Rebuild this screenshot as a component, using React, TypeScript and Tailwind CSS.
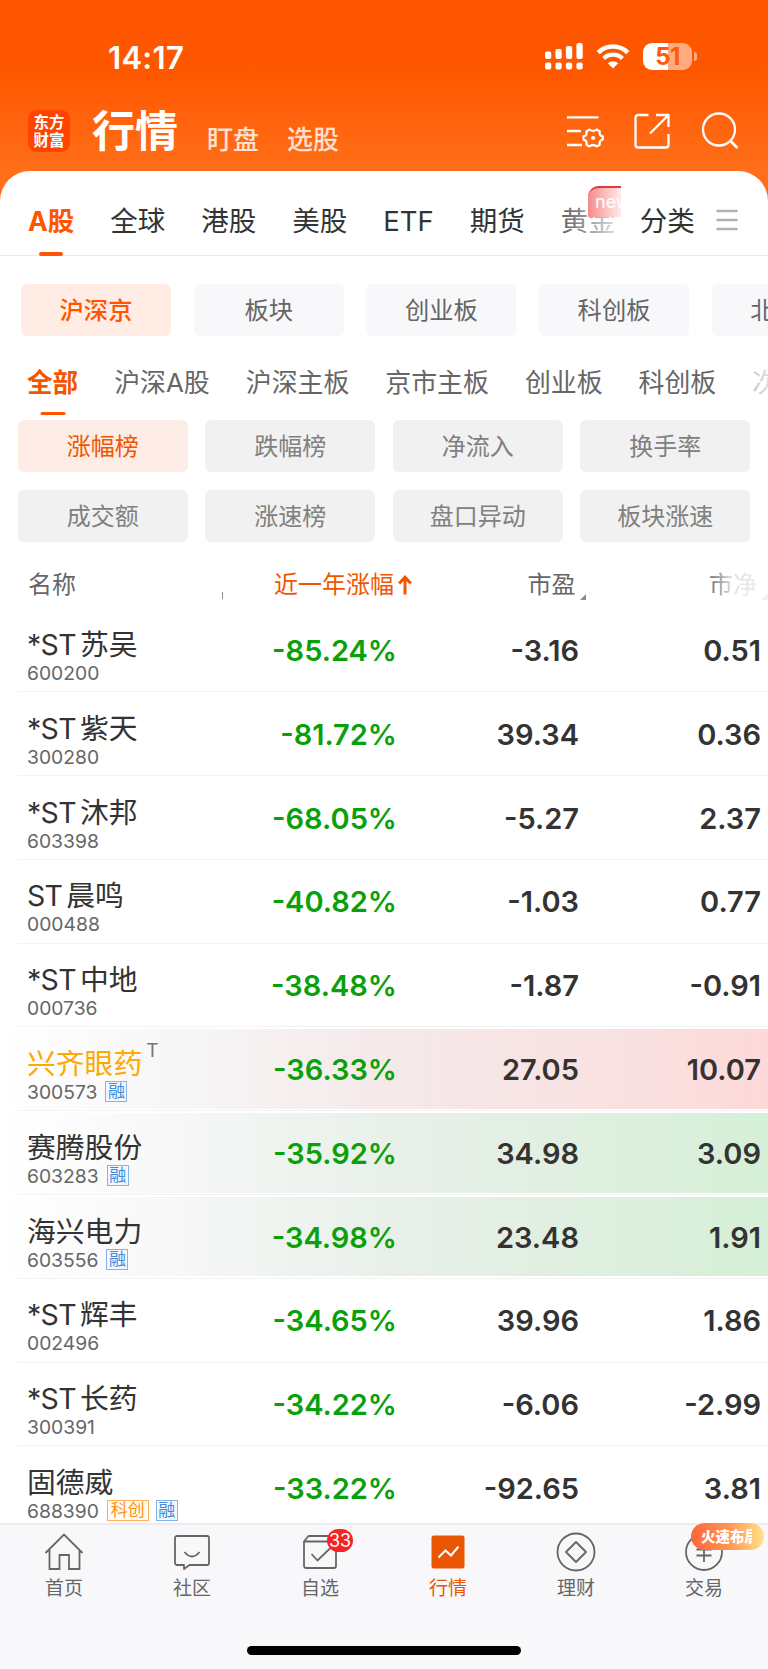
import { useState } from "react";
import type { ReactNode } from "react";

type Stock = {
  name: string;
  prefix?: string;
  code: string;
  change: string;
  pe: string;
  pb: string;
  tags?: string[];
  flash?: "up" | "down";
  held?: boolean;
};

const stocks: Stock[] = [
  { prefix: "*ST", name: "苏吴", code: "600200", change: "-85.24%", pe: "-3.16", pb: "0.51" },
  { prefix: "*ST", name: "紫天", code: "300280", change: "-81.72%", pe: "39.34", pb: "0.36" },
  { prefix: "*ST", name: "沐邦", code: "603398", change: "-68.05%", pe: "-5.27", pb: "2.37" },
  { prefix: "ST", name: "晨鸣", code: "000488", change: "-40.82%", pe: "-1.03", pb: "0.77" },
  { prefix: "*ST", name: "中地", code: "000736", change: "-38.48%", pe: "-1.87", pb: "-0.91" },
  { name: "兴齐眼药", code: "300573", change: "-36.33%", pe: "27.05", pb: "10.07", tags: ["融"], flash: "up", held: true },
  { name: "赛腾股份", code: "603283", change: "-35.92%", pe: "34.98", pb: "3.09", tags: ["融"], flash: "down" },
  { name: "海兴电力", code: "603556", change: "-34.98%", pe: "23.48", pb: "1.91", tags: ["融"], flash: "down" },
  { prefix: "*ST", name: "辉丰", code: "002496", change: "-34.65%", pe: "39.96", pb: "1.86" },
  { prefix: "*ST", name: "长药", code: "300391", change: "-34.22%", pe: "-6.06", pb: "-2.99" },
  { name: "固德威", code: "688390", change: "-33.22%", pe: "-92.65", pb: "3.81", tags: ["科创", "融"] },
];

const markets = ["A股", "全球", "港股", "美股", "ETF", "期货", "黄金"];
const groups = ["沪深京", "板块", "创业板", "科创板", "北交所"];
const boards = ["全部", "沪深A股", "沪深主板", "京市主板", "创业板", "科创板", "次新"];
const ranks = ["涨幅榜", "跌幅榜", "净流入", "换手率", "成交额", "涨速榜", "盘口异动", "板块涨速"];

function StatusBar() {
  return (
    <div className="flex h-[92px] items-start pl-[108px] pr-[71px] pt-[43px] text-white">
      <span className="text-[31px] font-semibold leading-[29px] tracking-[0.3px]">14:17</span>
      <div className="ml-auto flex items-center">
        <svg className="h-[27px] w-[38px]" viewBox="0 0 38 27" fill="white" aria-hidden="true">
          <rect x="0" y="8.5" width="6.3" height="7.5" rx="2" />
          <rect x="10.4" y="6" width="6.3" height="10" rx="2" />
          <rect x="20.9" y="3" width="6.3" height="13" rx="2" />
          <rect x="31.4" y="0" width="6.3" height="16" rx="2" />
          <rect x="0" y="19.5" width="6.3" height="7" rx="2" />
          <rect x="10.4" y="19.5" width="6.3" height="7" rx="2" />
          <rect x="20.9" y="19.5" width="6.3" height="7" rx="2" />
          <rect x="31.4" y="19.5" width="6.3" height="7" rx="2" />
        </svg>
        <svg className="ml-[13px] h-[25px] w-[34px]" viewBox="0 0 34 25" aria-hidden="true">
          <path d="M2.2 8.6a21 21 0 0 1 29.6 0" fill="none" stroke="white" strokeWidth="4.6" />
          <path d="M7.6 14.4a13.4 13.4 0 0 1 18.8 0" fill="none" stroke="white" strokeWidth="4.2" />
          <path d="M17 24.500l-5.2-5.2a7.4 7.4 0 0 1 10.4 0z" fill="white" />
        </svg>
        <div className="ml-[13px] flex h-[27px] w-[49px] items-center justify-center rounded-[9px] bg-[linear-gradient(to_right,white_51%,#ffab80_51%)] text-[24px] font-bold tracking-[-0.5px] text-[#ff5a05]">
          51
        </div>
        <div className="ml-[2px] h-[9px] w-[3px] rounded-r-full bg-[#ffab80]" />
      </div>
    </div>
  );
}

function TitleBar() {
  return (
    <div className="flex h-[79px] items-start pl-7 text-white">
      <div className="mt-[18px] flex h-[42px] w-[42px] flex-col items-center justify-center rounded-[9px] bg-[#ff4400] pt-px text-[15.5px] font-bold leading-[17.5px]">
        <span>东方</span>
        <span>财富</span>
      </div>
      <h1 className="ml-[22px] mt-[14px] text-[43px] font-bold leading-[50px]">行情</h1>
      <span className="ml-[29px] mt-[33px] text-[26px] font-medium leading-[30px] text-white/80">盯盘</span>
      <span className="ml-[28px] mt-[33px] text-[26px] font-medium leading-[30px] text-white/80">选股</span>
      <div className="ml-auto mt-[19px] flex pr-[29px]">
        <svg className="h-[40px] w-[40px]" viewBox="0 0 40 40" fill="none" stroke="white" strokeWidth="2.3" aria-hidden="true">
          <path d="M2 6.3h31.5M2 20h14M2 34h15" />
          <path
            strokeLinejoin="round"
            strokeWidth="2.2"
            d="M24.500 18.500q3.600 3 7.200 0l3 1.700q-.8 4.500 3 5.200v3.200q-3.800.7-3 5.200l-3 1.700q-3.600-3-7.200 0l-3-1.700q.8-4.500-3-5.200v-3.200q3.800-.7 3-5.200z"
          />
          <circle cx="28.1" cy="27" r="2.1" fill="white" stroke="none" />
        </svg>
        <svg className="ml-[29px] h-[40px] w-[36px]" viewBox="0 0 36 40" fill="none" stroke="white" strokeWidth="2.3" strokeLinejoin="round" aria-hidden="true">
          <path d="M14.5 4H4a2.5 2.5 0 0 0-2.5 2.5V34A2.5 2.5 0 0 0 4 36.5h28a2.5 2.5 0 0 0 2.5-2.5V23M22 4h12.5v12M34.5 4L16 22.5" />
        </svg>
        <svg className="ml-[31px] h-[40px] w-[38px]" viewBox="0 0 38 40" fill="none" stroke="white" strokeWidth="2.3" aria-hidden="true">
          <circle cx="18" cy="18.5" r="16" />
          <path d="M29 29.5l7.5 7.5" strokeWidth="2.8" />
        </svg>
      </div>
    </div>
  );
}

function MarketTabs({ active, onChange }: { active: string; onChange: (item: string) => void }) {
  return (
    <div className="relative flex h-[85px] items-center border-b border-[#ebebed] pl-7 pt-3 text-[27.5px] leading-[36px] text-[#333]">
      <div className="flex gap-[36px]">
        {markets.map((item) => (
          <button
            key={item}
            type="button"
            onClick={() => onChange(item)}
            className={`relative h-[73px] whitespace-nowrap pt-[3px] ${item === active ? "text-[26.5px] font-bold text-[#ff5400]" : ""}`}
          >
            {item}
            {item === active ? (
              <span className="absolute bottom-0 left-1/2 h-[4px] w-6 -translate-x-1/2 rounded-sm bg-[#ff5400]" />
            ) : null}
          </button>
        ))}
      </div>
      <div className="absolute left-[552px] top-2 h-[72px] w-[69px] bg-gradient-to-r from-white/10 to-white/90" />
      <div className="absolute left-[588px] top-[15px] h-[31px] w-[33px] overflow-hidden rounded-tl-[11px] border-t-2 border-[#e23b3b] bg-gradient-to-r from-[#f58b8b] to-[#fdeaea] pl-[7px] text-[18px] leading-[28px] text-white">
        new
      </div>
      <button type="button" className="ml-[24px] whitespace-nowrap pt-[3px]">分类</button>
      <svg className="ml-[21px] mt-[2px] h-[22px] w-[22px] shrink-0" viewBox="0 0 22 22" stroke="#b0b0b0" strokeWidth="2.5" strokeLinecap="round" aria-hidden="true">
        <path d="M1.5 2h19M1.5 11h19M1.5 20h19" />
      </svg>
    </div>
  );
}

function BoardTabs({ active, onChange }: { active: string; onChange: (item: string) => void }) {
  return (
    <div className="relative mt-[22px] flex h-[57px] gap-[36px] overflow-hidden pl-[27px] text-[25.9px] text-[#666]">
      {boards.map((item) => (
        <button
          key={item}
          type="button"
          onClick={() => onChange(item)}
          className={`relative h-[57px] shrink-0 whitespace-nowrap pb-[7px] ${item === active ? "text-[25.6px] font-bold text-[#f25500]" : ""}`}
        >
          {item}
          {item === active ? (
            <span className="absolute bottom-0 left-1/2 h-[3px] w-[25px] -translate-x-1/2 rounded-sm bg-[#ff5400]" />
          ) : null}
        </button>
      ))}
      <div className="absolute right-0 top-0 h-full w-10 bg-gradient-to-r from-white/30 to-white/80" />
    </div>
  );
}

function TableHead() {
  return (
    <div className="relative flex h-[66px] items-center pt-[20px] text-[24px] leading-[30px] text-[#666]">
      <div className="w-[223px] pl-[28px]">名称</div>
      <div className="absolute left-[222px] top-[50px] h-[7px] w-px bg-[#888c96]" />
      <div className="flex w-[190px] items-center justify-end text-[#f25500]">
        近一年涨幅
        <svg className="ml-[4px] h-[20px] w-[14px]" viewBox="0 0 14 20" fill="none" stroke="currentColor" strokeWidth="3" aria-hidden="true">
          <path d="M7 19.5V3M1.2 8.5L7 2.3l5.8 6.2" />
        </svg>
      </div>
      <div className="w-[164px] text-right">市盈</div>
      <svg className="ml-[4px] mt-[22px] h-[7px] w-[7px]" viewBox="0 0 7 7" aria-hidden="true">
        <path d="M7 0v7H0z" fill="#888c96" />
      </svg>
      <div className="w-[171px] text-right">市净</div>
      <svg className="ml-[4px] mt-[22px] h-[7px] w-[7px] shrink-0" viewBox="0 0 7 7" aria-hidden="true">
        <path d="M7 0v7H0z" fill="#888c96" />
      </svg>
      <div className="absolute right-0 top-4 h-12 w-[60px] bg-gradient-to-r from-white/0 via-white/80 via-40% to-white/90" />
    </div>
  );
}

function StockRow({ stock }: { stock: Stock }) {
  const flash =
    stock.flash === "up"
      ? "bg-[linear-gradient(to_right,white,#f7f6f6_24%,#f5e9ea_50%,#f9e1e1_82%,#fed9d9)]"
      : stock.flash === "down"
        ? "bg-[linear-gradient(to_right,white,#f6f7f6_24%,#e9f0ea_50%,#ddefde_82%,#d5f0d7)]"
        : "";

  return (
    <div className="h-[83.8px] pb-[2px] pt-[2px]">
      <div className={`relative flex h-full items-start text-[#333] ${flash}`}>
        <div className="w-[223px] pl-[27px] pt-[18px]">
          <div className={`flex items-center text-[28.8px] leading-[34px] ${stock.held ? "text-[#ffa800]" : ""}`}>
            {stock.prefix ? <span className="mr-[4px] text-[28.5px] tracking-[-0.7px]">{stock.prefix}</span> : null}
            <span>{stock.name}</span>
            {stock.held ? <span className="-mt-[26px] ml-[4px] text-[19px] text-[#777]">T</span> : null}
          </div>
          <div className="-mt-px flex h-[24px] items-center text-[19.3px] leading-[24px] text-[#666]">
            <span className="mr-[8px]">{stock.code}</span>
            {stock.tags?.map((tag) => (
              <span
                key={tag}
                className={`mr-[7px] flex h-[21px] items-center border text-[17px] leading-none ${
                  tag === "融" ? "border-[#82b4ea] bg-[#f2f8ff] px-[1.5px] text-[#4389dc]" : "border-[#ffb155] bg-[#fffaf2] px-[3px] text-[#ff9213]"
                }`}
              >
                {tag}
              </span>
            ))}
          </div>
        </div>
        <div className="w-[174px] pt-[23px] text-right text-[29px] font-semibold leading-[36px] text-[#0aa00a]">{stock.change}</div>
        <div className="w-[182px] pt-[23px] text-right text-[29px] font-semibold leading-[36px]">{stock.pe}</div>
        <div className="w-[182px] pt-[23px] text-right text-[29px] font-semibold leading-[36px]">{stock.pb}</div>
        <div className="absolute -bottom-[2.5px] left-[18px] right-0 h-px bg-[#f3f3f3]" />
      </div>
    </div>
  );
}

function NavItem({ label, active, children }: { label: string; active?: boolean; children: ReactNode }) {
  return (
    <button type="button" className={`relative flex w-32 flex-col items-center pt-[7px] ${active ? "text-[#ea5504]" : "text-[#666]"}`}>
      <svg className="h-[40px] w-[40px]" viewBox="0 0 40 40" fill="none" stroke="currentColor" strokeWidth="1.8" aria-hidden="true">
        {children}
      </svg>
      <span className="mt-[4px] text-[19px] leading-[26px]">{label}</span>
    </button>
  );
}

function BottomNav() {
  return (
    <nav className="relative h-[146px] shrink-0 border-t-2 border-[#ececf0] bg-[#f8f8fb]">
      <div className="flex">
        <NavItem label="首页">
          <path d="M1.5 21L20 2.5 38.5 21M5.5 17.5V37H15.5V23h9.5v14h10.5V17.5" />
        </NavItem>
        <NavItem label="社区">
          <path strokeLinejoin="round" d="M5 4h30a2 2 0 0 1 2 2v25a2 2 0 0 1-2 2H17.5l-5.5 4v-4H5a2 2 0 0 1-2-2V6a2 2 0 0 1 2-2z" />
          <path d="M12.5 20q7.5 9 15 0" />
        </NavItem>
        <NavItem label="自选">
          <path strokeLinejoin="round" d="M4 9.500l4.5-5.500H32l4 5.500M4 9.500h32v24.500a2 2 0 0 1-2 2H6a2 2 0 0 1-2-2z" />
          <path d="M11.5 22l6 6.500L32 14.5" />
        </NavItem>
        <NavItem label="行情" active>
          <rect x="3.5" y="3.5" width="33" height="33" rx="2" fill="#ea5504" stroke="none" />
          <path d="M10.5 25.5l7-7 5.5 5L30.5 14.5" stroke="white" strokeWidth="2" />
        </NavItem>
        <NavItem label="理财">
          <circle cx="20" cy="20" r="18.5" />
          <path d="M20 10l10 10-10 10-10-10z" strokeLinejoin="round" />
        </NavItem>
        <NavItem label="交易">
          <circle cx="20" cy="20" r="18" />
          <path d="M13 9l7 8 7-8M20 17v13M12.5 17.5h15M12.5 23.5h15" />
        </NavItem>
      </div>
      <span className="absolute left-[327px] top-[4px] flex h-[23px] w-[26px] items-center justify-center rounded-full bg-[#fa2323] text-[18px] text-white">33</span>
      <span className="absolute left-[691px] top-[-2px] flex h-[27px] w-[73px] items-center rounded-full bg-gradient-to-r from-[#ff6539] via-[#ff9250] to-[#ffe38a] pl-[10px] text-[14.5px] font-black text-white">
        <span className="w-[51px] overflow-hidden whitespace-nowrap">火速布局</span>
      </span>
      <div className="absolute bottom-[14px] left-[247px] h-[9px] w-[274px] rounded-full bg-black" />
    </nav>
  );
}

export default function App() {
  const [market, setMarket] = useState("A股");
  const [group, setGroup] = useState("沪深京");
  const [board, setBoard] = useState("全部");
  const [rank, setRank] = useState("涨幅榜");

  return (
    <div className="flex h-[1669px] w-[768px] flex-col overflow-hidden bg-white font-['Inter','Noto_Sans_CJK_SC',sans-serif]">
      <header className="h-[211px] shrink-0 bg-[linear-gradient(to_bottom,#ff5700_70px,#ff6f1a_171px)]">
        <StatusBar />
        <TitleBar />
      </header>
      <main className="relative -mt-10 h-[1352px] shrink-0 overflow-hidden rounded-t-[30px] bg-white">
        <MarketTabs active={market} onChange={setMarket} />
        <div className="mt-7 flex gap-[22.7px] overflow-hidden pl-[21px]">
          {groups.map((item) => (
            <button
              key={item}
              type="button"
              onClick={() => setGroup(item)}
              className={`h-[52px] w-[150px] shrink-0 rounded-md pt-px text-[24.3px] ${
                item === group ? "bg-[#ffede5] font-medium text-[#ff5400]" : "bg-[#f8f8fa] text-[#666]"
              }`}
            >
              {item}
            </button>
          ))}
        </div>
        <BoardTabs active={board} onChange={setBoard} />
        <div className="mt-[5px] grid grid-cols-4 gap-x-[17.8px] gap-y-[18px] px-[18px]">
          {ranks.map((item) => (
            <button
              key={item}
              type="button"
              onClick={() => setRank(item)}
              className={`h-[52px] rounded-md pt-[2px] text-[24px] ${
                item === rank ? "bg-[#fdede6] text-[#f25500]" : "bg-[#f1f1f1] text-[#808080]"
              }`}
            >
              {item}
            </button>
          ))}
        </div>
        <TableHead />
        {stocks.map((stock) => (
          <StockRow key={stock.code} stock={stock} />
        ))}
      </main>
      <BottomNav />
    </div>
  );
}
